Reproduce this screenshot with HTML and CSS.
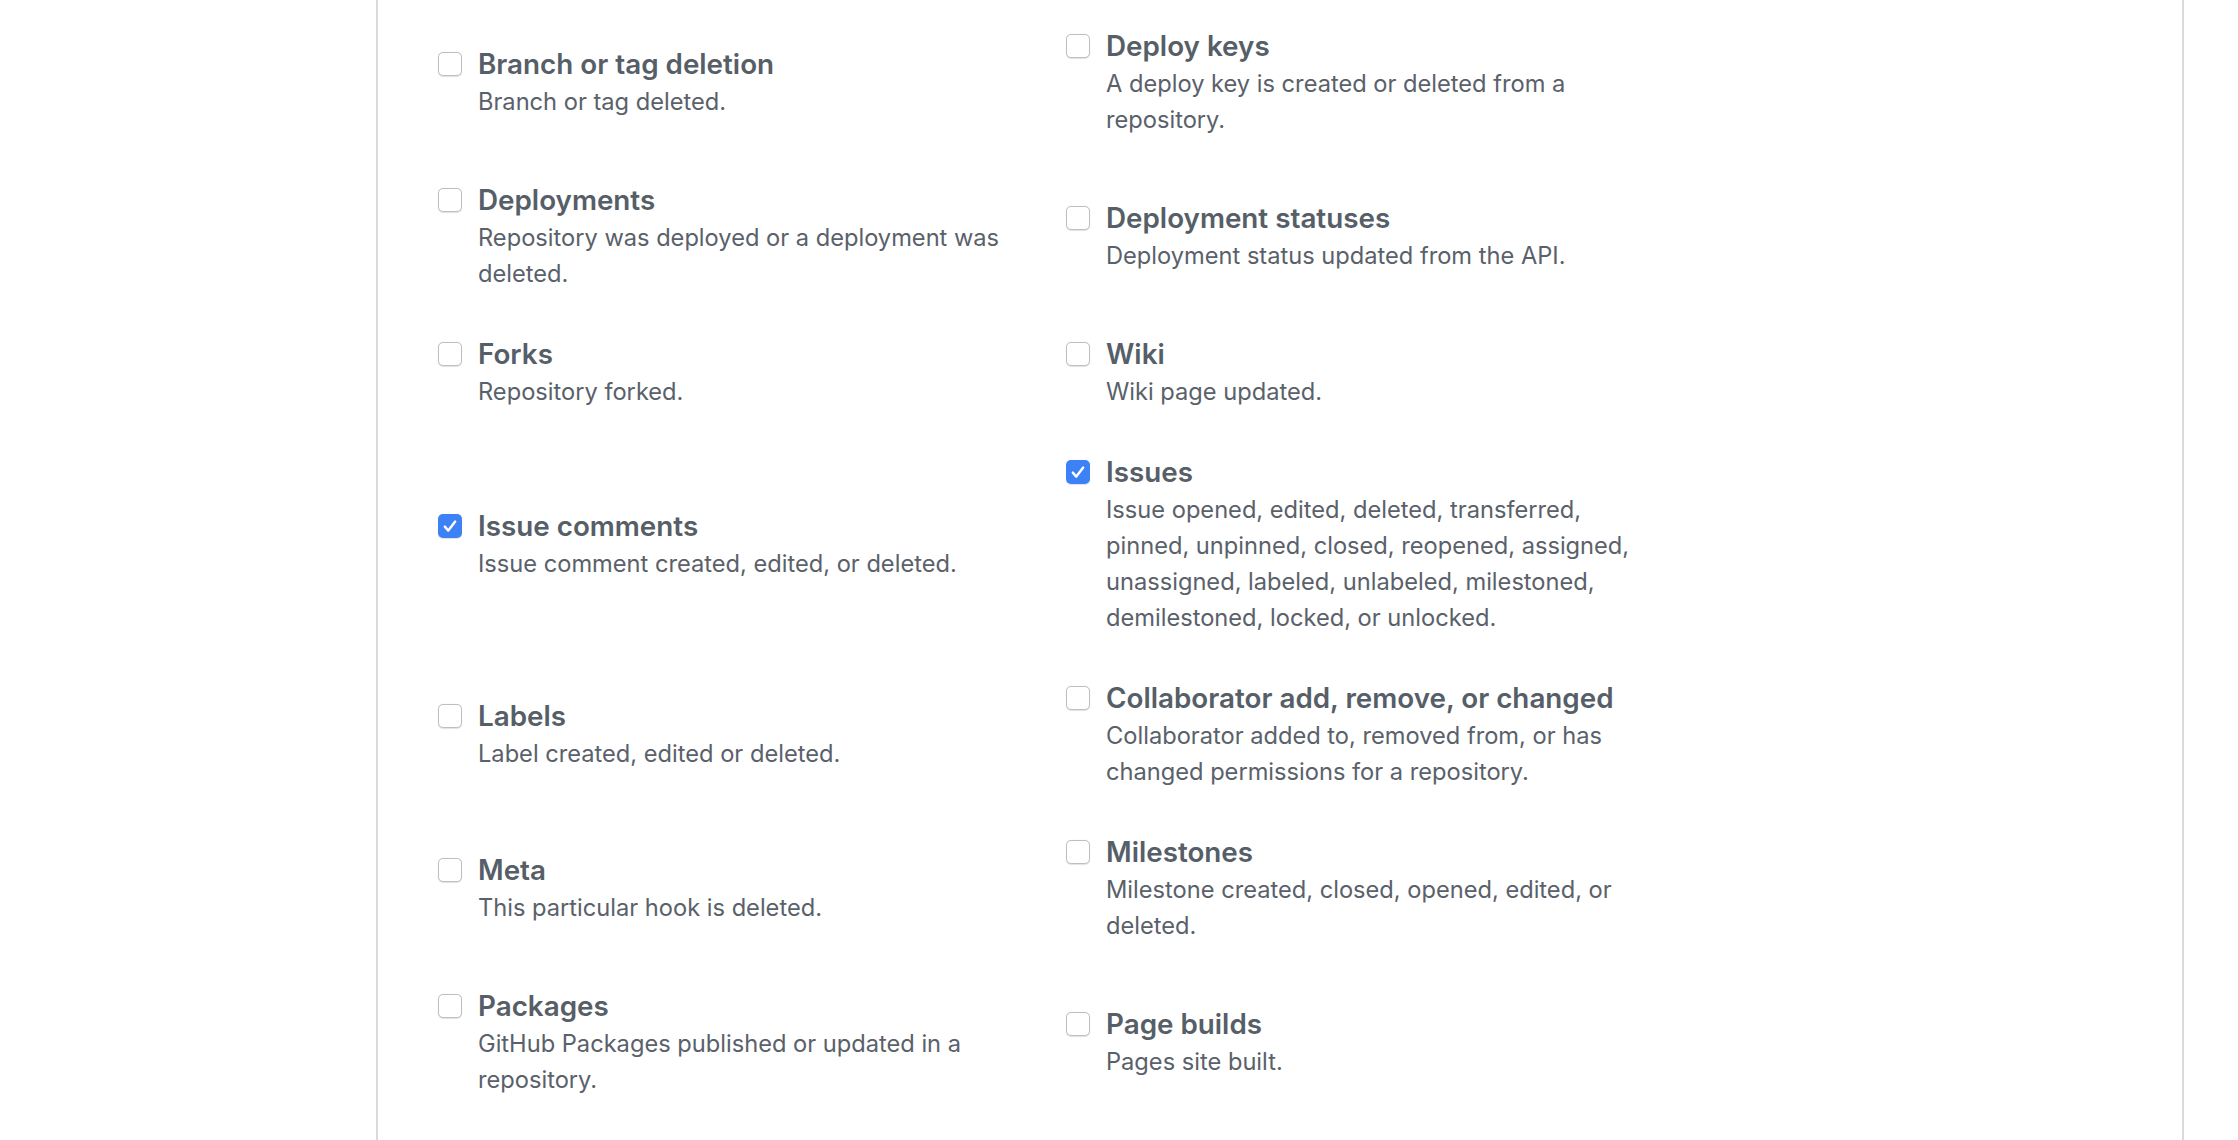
FILE: index.html
```html
<!DOCTYPE html>
<html lang="en">
<head>
<meta charset="utf-8">
<title>Webhook events</title>
<link rel="stylesheet" href="styles.css">
</head>
<body>
<div class="panel">
  <div class="events">
    <label class="event">
      <span class="cb"></span>
      <span class="text"><span class="title">Branch or tag deletion</span><span class="desc">Branch or tag deleted.</span></span>
    </label>
    <label class="event">
      <span class="cb"></span>
      <span class="text"><span class="title">Deploy keys</span><span class="desc">A deploy key is created or deleted from a repository.</span></span>
    </label>
    <label class="event">
      <span class="cb"></span>
      <span class="text"><span class="title">Deployments</span><span class="desc">Repository was deployed or a deployment was deleted.</span></span>
    </label>
    <label class="event">
      <span class="cb"></span>
      <span class="text"><span class="title">Deployment statuses</span><span class="desc">Deployment status updated from the API.</span></span>
    </label>
    <label class="event">
      <span class="cb"></span>
      <span class="text"><span class="title">Forks</span><span class="desc">Repository forked.</span></span>
    </label>
    <label class="event">
      <span class="cb"></span>
      <span class="text"><span class="title">Wiki</span><span class="desc">Wiki page updated.</span></span>
    </label>
    <label class="event">
      <span class="cb checked"><svg viewBox="0 0 24 24" width="24" height="24"><path d="M6.8 12.6 L10.3 16.6 L17.2 7.6" fill="none" stroke="#fff" stroke-width="2.4" stroke-linecap="round" stroke-linejoin="round"/></svg></span>
      <span class="text"><span class="title">Issue comments</span><span class="desc">Issue comment created, edited, or deleted.</span></span>
    </label>
    <label class="event">
      <span class="cb checked"><svg viewBox="0 0 24 24" width="24" height="24"><path d="M6.8 12.6 L10.3 16.6 L17.2 7.6" fill="none" stroke="#fff" stroke-width="2.4" stroke-linecap="round" stroke-linejoin="round"/></svg></span>
      <span class="text"><span class="title">Issues</span><span class="desc">Issue opened, edited, deleted, transferred, pinned, unpinned, closed, reopened, assigned, unassigned, labeled, unlabeled, milestoned, demilestoned, locked, or unlocked.</span></span>
    </label>
    <label class="event">
      <span class="cb"></span>
      <span class="text"><span class="title">Labels</span><span class="desc">Label created, edited or deleted.</span></span>
    </label>
    <label class="event">
      <span class="cb"></span>
      <span class="text"><span class="title">Collaborator add, remove, or changed</span><span class="desc">Collaborator added to, removed from, or has changed permissions for a repository.</span></span>
    </label>
    <label class="event">
      <span class="cb"></span>
      <span class="text"><span class="title">Meta</span><span class="desc">This particular hook is deleted.</span></span>
    </label>
    <label class="event">
      <span class="cb"></span>
      <span class="text"><span class="title">Milestones</span><span class="desc">Milestone created, closed, opened, edited, or deleted.</span></span>
    </label>
    <label class="event">
      <span class="cb"></span>
      <span class="text"><span class="title">Packages</span><span class="desc">GitHub Packages published or updated in a repository.</span></span>
    </label>
    <label class="event">
      <span class="cb"></span>
      <span class="text"><span class="title">Page builds</span><span class="desc">Pages site built.</span></span>
    </label>
  </div>
</div>
</body>
</html>
```

FILE: styles.css
```css
html, body {
  margin: 0;
  padding: 0;
  background: #ffffff;
}

body {
  font-family: Inter, "Liberation Sans", Arial, sans-serif;
  color: #586069;
  overflow: hidden;
}

.panel {
  box-sizing: border-box;
  margin-left: 376px;
  width: 1808px;
  min-height: 1140px;
  border-left: 2px solid #d9dadc;
  border-right: 2px solid #d9dadc;
  padding: 26px 0 0 60px;
}

.events {
  display: grid;
  grid-template-columns: 628px 628px;
  row-gap: 42px;
  align-items: center;
}

.event {
  display: flex;
  align-items: flex-start;
  gap: 16px;
}

.cb {
  flex: 0 0 auto;
  box-sizing: border-box;
  width: 24px;
  height: 24px;
  margin-top: 8px;
  border: 1px solid #bfbfc2;
  border-radius: 5px;
  background: #ffffff;
  box-shadow: 0 0.5px 1px rgba(0, 0, 0, 0.12);
  display: flex;
}

.cb.checked {
  border: none;
  background: #3c82f6;
}

.text {
  display: flex;
  flex-direction: column;
  max-width: 540px;
}

.title {
  font-size: 27.8px;
  font-weight: 600;
  line-height: 40px;
  color: #565e67;
}

.desc {
  font-size: 23.65px;
  line-height: 36px;
  color: #5a616a;
}
```
